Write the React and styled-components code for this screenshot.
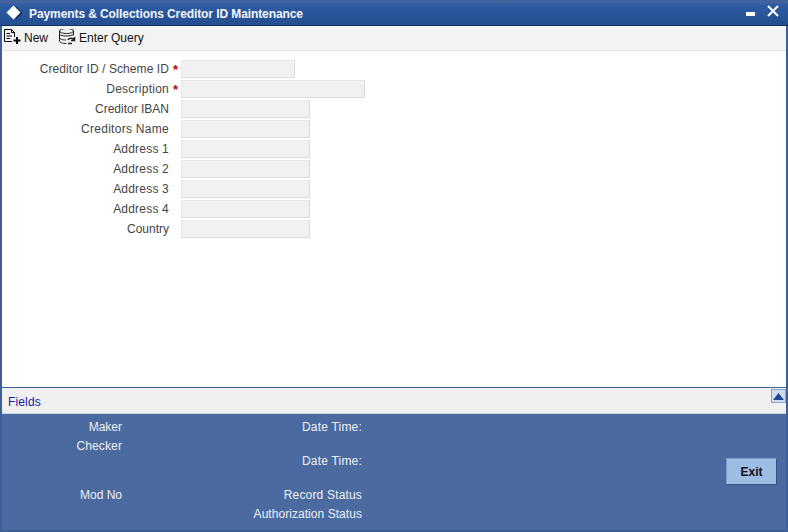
import React from 'react'
import styled, { createGlobalStyle } from 'styled-components'

const Global = createGlobalStyle`
	html, body {
		margin: 0;
		padding: 0;
		background: #3d5f98;
	}
	body {
		font-family: "Liberation Sans", Arial, sans-serif;
		font-size: 12px;
	}
`

const Window = styled.div`
	width: 788px;
	height: 532px;
	box-sizing: border-box;
	padding: 0 2px 2px 2px;
	display: flex;
	flex-direction: column;
	overflow: hidden;
	background: #3d5f98;
`

const TitleBar = styled.div`
	height: 26px;
	flex: none;
	box-sizing: border-box;
	margin: 0 -2px;
	padding: 2px 9px 0 6px;
	display: flex;
	align-items: center;
	background: linear-gradient(#42649c 0, #42649c 3px, #2f5ca2 4px, #234e90 100%);
	border-bottom: 1px solid #16305f;
	color: #fff;
`

const Title = styled.span`
	margin-left: 6px;
	font-size: 12px;
	font-weight: bold;
	letter-spacing: -0.09px;
	color: #f2f5fa;
`

const WindowButtons = styled.div`
	margin-left: auto;
	align-self: flex-start;
	display: flex;
	align-items: flex-start;
	gap: 11px;
`

const Toolbar = styled.div`
	height: 25px;
	flex: none;
	box-sizing: border-box;
	padding: 0 0 0 2px;
	display: flex;
	align-items: center;
	background: #f3f3f3;
	border-bottom: 1px solid #e6e6e6;
`

const ToolButton = styled.div`
	display: flex;
	align-items: center;
	gap: 2px;
	margin-right: 11px;
	color: #111;
	font-size: 12px;
`

const Form = styled.div`
	flex: 1;
	box-sizing: border-box;
	padding: 9px 0 0 0;
	display: flex;
	flex-direction: column;
	gap: 2px;
	background: #fff;
	border-bottom: 1px solid #3d5f98;
`

const Row = styled.div`
	height: 18px;
	display: flex;
	align-items: center;
`

const Label = styled.label`
	width: 167px;
	text-align: right;
	color: #444;
	font-size: 12px;
	letter-spacing: ${p => p.$track}px;
`

const Star = styled.span`
	width: 12px;
	flex: none;
	box-sizing: border-box;
	padding-left: 4px;
	color: #c00000;
	font-weight: bold;
	font-size: 13px;
`

const Input = styled.div`
	width: ${p => p.$w}px;
	height: 18px;
	box-sizing: border-box;
	background: #f1f1f1;
	border: 1px solid #e8e8e8;
	border-bottom-color: #dadada;
	border-right-color: #dadada;
`

const FieldsBar = styled.div`
	height: 25px;
	flex: none;
	box-sizing: border-box;
	padding: 1px 0 0 6px;
	display: flex;
	align-items: flex-start;
	justify-content: space-between;
	background: #f0f0f0;
`

const FieldsLink = styled.span`
	margin-top: 6px;
	color: #1a1aa6;
	font-size: 12px;
	letter-spacing: 0.15px;
`

const Collapse = styled.div`
	width: 15px;
	height: 14px;
	box-sizing: border-box;
	display: flex;
	align-items: center;
	justify-content: center;
	background: #cfdcee;
	border: 1px solid #8aa4c8;
`

const Footer = styled.div`
	height: 117px;
	flex: none;
	display: flex;
	box-sizing: border-box;
	padding: 5px 9px 0 0;
	background: #4a6aa0;
	border-top: 1px solid #c8d2e2;
`

const AuditColumn = styled.div`
	width: ${p => p.$w}px;
	flex: none;
	display: flex;
	flex-direction: column;
`

const AuditLabel = styled.div`
	height: ${p => p.$h}px;
	text-align: right;
	color: #eef1f6;
	font-size: 12px;
	line-height: 17px;
	letter-spacing: ${p => p.$track || 0}px;
`

const ExitWrap = styled.div`
	margin-left: auto;
	padding-top: 39px;
`

const ExitButton = styled.button`
	display: block;
	width: 51px;
	height: 27px;
	padding: 0;
	background: #9dbde4;
	border: 1px solid #7f9cc6;
	border-right-color: #33507f;
	border-bottom-color: #33507f;
	color: #111;
	font-family: inherit;
	font-size: 12px;
	font-weight: bold;
`

const DiamondIcon = () => (
	<svg width="17" height="17" viewBox="0 0 17 17">
		<path d="M9.5 1 L16.5 8 L9.5 15 Z" fill="#12305f" />
		<path d="M7.5 0.5 L14.5 7.5 L7.5 14.5 L0.5 7.5 Z" fill="#fff" />
	</svg>
)

const MinimizeIcon = () => (
	<svg width="10" height="16" viewBox="0 0 10 16">
		<rect x="0" y="10" width="9" height="4" fill="#fff" />
	</svg>
)

const CloseIcon = () => (
	<svg width="12" height="12" viewBox="0 0 12 12" style={{ marginTop: 3 }}>
		<path d="M1 1 L11 11 M11 1 L1 11" stroke="#fff" strokeWidth="2" />
	</svg>
)

const NewIcon = () => (
	<svg width="18" height="18" viewBox="0 0 18 18" fill="none" stroke="#000" strokeWidth="1">
		<path d="M0.5 0.5 H7.5 L10.5 3.5 V8 M0.5 0.5 V12.5 H8" />
		<path d="M7.5 0.5 V3.5 H10.5" />
		<path d="M2.5 4.5 H6 M2.5 7 H8 M2.5 9.5 H6" />
		<path d="M13 8 V15 M9.5 11.5 H16.5" strokeWidth="2" />
	</svg>
)

const QueryIcon = () => (
	<svg width="18" height="18" viewBox="0 1 18 18" fill="none" stroke="#222" strokeWidth="1">
		<ellipse cx="7.5" cy="3" rx="7" ry="2.5" />
		<path d="M0.5 3 V13 C0.5 14.5 3.5 15.5 7.5 15.5" />
		<path d="M14.5 3 V7.5" />
		<path d="M0.5 6.5 C2.5 8.5 11 8.5 14.5 6.5" />
		<path d="M0.5 10 C2.5 12 5 12 7 12" />
		<path d="M9 12 C10 9.5 14 9.5 15.5 12 M15.5 9 V12.5 H12 M9 15.5 H13" strokeWidth="1.5" />
	</svg>
)

const ArrowUp = () => (
	<svg width="11" height="7" viewBox="0 0 11 7">
		<path d="M5.5 0 L11 7 H0 Z" fill="#1f4a8c" />
	</svg>
)

const fields = [
	{ label: 'Creditor ID / Scheme ID', w: 114, required: true, track: 0.08 },
	{ label: 'Description', w: 184, required: true, track: 0.25 },
	{ label: 'Creditor IBAN', w: 129, track: 0 },
	{ label: 'Creditors Name', w: 129, track: 0.28 },
	{ label: 'Address 1', w: 129, track: 0.2 },
	{ label: 'Address 2', w: 129, track: 0.2 },
	{ label: 'Address 3', w: 129, track: 0.2 },
	{ label: 'Address 4', w: 129, track: 0.2 },
	{ label: 'Country', w: 129, track: 0 }
]

const App = () => {
	return (
		<Window>
			<Global />
			<TitleBar>
				<DiamondIcon />
				<Title>Payments &amp; Collections Creditor ID Maintenance</Title>
				<WindowButtons>
					<MinimizeIcon />
					<CloseIcon />
				</WindowButtons>
			</TitleBar>
			<Toolbar>
				<ToolButton>
					<NewIcon />
					New
				</ToolButton>
				<ToolButton>
					<QueryIcon />
					Enter Query
				</ToolButton>
			</Toolbar>
			<Form>
				{fields.map(f => (
					<Row key={f.label}>
						<Label $track={f.track}>{f.label}</Label>
						<Star>{f.required ? '*' : ''}</Star>
						<Input $w={f.w} />
					</Row>
				))}
			</Form>
			<FieldsBar>
				<FieldsLink>Fields</FieldsLink>
				<Collapse>
					<ArrowUp />
				</Collapse>
			</FieldsBar>
			<Footer>
				<AuditColumn $w={120}>
					<AuditLabel $h={19}>Maker</AuditLabel>
					<AuditLabel $h={49} $track={0.12}>Checker</AuditLabel>
					<AuditLabel $h={17}>Mod No</AuditLabel>
				</AuditColumn>
				<AuditColumn $w={240}>
					<AuditLabel $h={34} $track={0.2}>Date Time:</AuditLabel>
					<AuditLabel $h={34} $track={0.2}>Date Time:</AuditLabel>
					<AuditLabel $h={19} $track={0.17}>Record Status</AuditLabel>
					<AuditLabel $h={17} $track={0.05}>Authorization Status</AuditLabel>
				</AuditColumn>
				<ExitWrap>
					<ExitButton>Exit</ExitButton>
				</ExitWrap>
			</Footer>
		</Window>
	)
}

export default React.memo(App)
